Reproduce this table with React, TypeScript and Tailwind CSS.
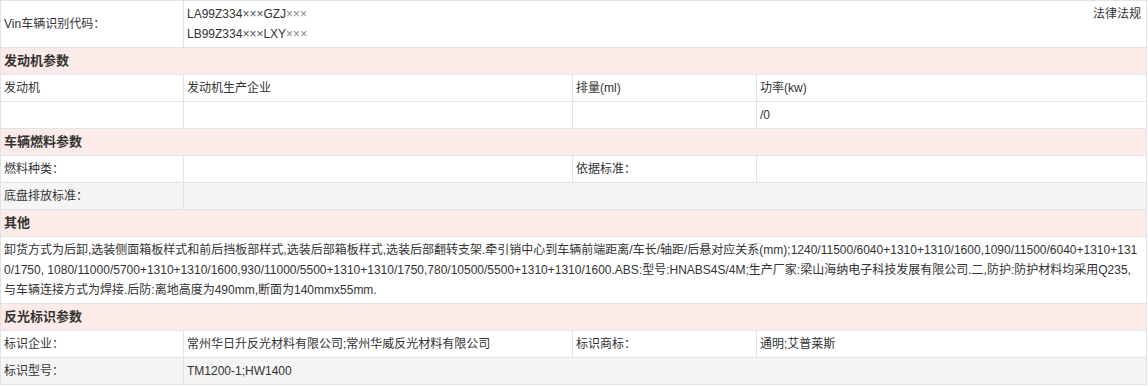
import React from "react";

const td = "border border-[#dfe4e8] px-[3px] py-0 h-[27px] align-middle text-left font-normal";
const head = "border border-[#dfe4e8] px-[3px] py-0 h-[27px] align-middle text-left bg-[#fdebe9] font-bold text-[13px]";

export default function App() {
  return (
    <div className="bg-white w-[1148px] h-[386px] overflow-hidden text-[#333] text-[12px] leading-[20px]" style={{ fontFamily: '"Liberation Sans", "Noto Sans CJK SC", sans-serif' }}>
      <table className="table-fixed border-collapse w-[1146px]">
        <colgroup>
          <col className="w-[183px]" />
          <col className="w-[389px]" />
          <col className="w-[184px]" />
          <col className="w-[390px]" />
        </colgroup>
        <tbody>
          <tr>
            <td className={td + " h-[47px]"}>Vin车辆识别代码：</td>
            <td className="border border-[#dfe4e8] px-[3px] py-[3px] h-[47px] align-top" colSpan={3}>
              <div className="flex justify-between">
                <div>
                  <div>LA99Z334<span className="text-[#555]">×××</span>GZJ<span className="text-[#888]">×××</span></div>
                  <div>LB99Z334<span className="text-[#555]">×××</span>LXY<span className="text-[#888]">×××</span></div>
                </div>
                <div className="pr-[2px]">法律法规</div>
              </div>
            </td>
          </tr>
          <tr>
            <td className={head} colSpan={4}>发动机参数</td>
          </tr>
          <tr>
            <td className={td}>发动机</td>
            <td className={td}>发动机生产企业</td>
            <td className={td}>排量(ml)</td>
            <td className={td}>功率(kw)</td>
          </tr>
          <tr>
            <td className={td}></td>
            <td className={td}></td>
            <td className={td}></td>
            <td className={td}>/0</td>
          </tr>
          <tr>
            <td className={head} colSpan={4}>车辆燃料参数</td>
          </tr>
          <tr>
            <td className={td}>燃料种类：</td>
            <td className={td}></td>
            <td className={td}>依据标准：</td>
            <td className={td}></td>
          </tr>
          <tr className="bg-[#f5f5f5]">
            <td className={td}>底盘排放标准：</td>
            <td className={td} colSpan={3}></td>
          </tr>
          <tr>
            <td className={head} colSpan={4}>其他</td>
          </tr>
          <tr>
            <td className="border border-[#dfe4e8] px-[3px] py-[3px] h-[67px] align-top" colSpan={4}>
              <div className="whitespace-nowrap overflow-hidden">卸货方式为后卸,选装侧面箱板样式和前后挡板部样式,选装后部箱板样式,选装后部翻转支架.牵引销中心到车辆前端距离/车长/轴距/后悬对应关系(mm);1240/11500/6040+1310+1310/1600,1090/11500/6040+1310+131</div>
              <div className="whitespace-nowrap overflow-hidden">0/1750, 1080/11000/5700+1310+1310/1600,930/11000/5500+1310+1310/1750,780/10500/5500+1310+1310/1600.ABS:型号:HNABS4S/4M;生产厂家:梁山海纳电子科技发展有限公司.二,防护:防护材料均采用Q235,</div>
              <div className="whitespace-nowrap overflow-hidden">与车辆连接方式为焊接.后防:离地高度为490mm,断面为140mmx55mm.</div>
            </td>
          </tr>
          <tr>
            <td className={head} colSpan={4}>反光标识参数</td>
          </tr>
          <tr>
            <td className={td}>标识企业：</td>
            <td className={td}>常州华日升反光材料有限公司;常州华威反光材料有限公司</td>
            <td className={td}>标识商标：</td>
            <td className={td}>通明;艾普莱斯</td>
          </tr>
          <tr className="bg-[#f5f5f5]">
            <td className={td}>标识型号：</td>
            <td className={td} colSpan={3}>TM1200-1;HW1400</td>
          </tr>
        </tbody>
      </table>
    </div>
  );
}
